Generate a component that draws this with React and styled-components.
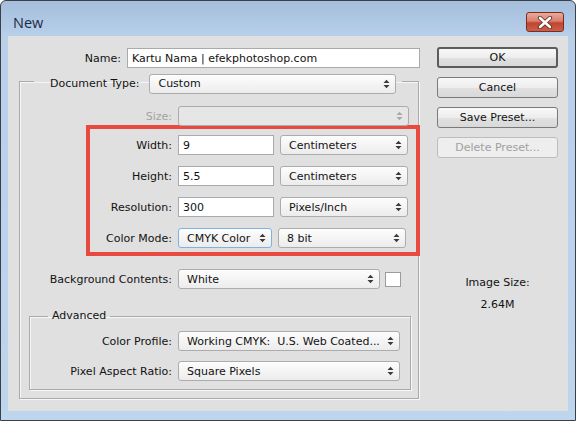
import React from "react";
import styled, { createGlobalStyle } from "styled-components";

const GlobalStyle = createGlobalStyle`
  html, body { margin: 0; padding: 0; }
  body {
    width: 576px;
    height: 421px;
    overflow: hidden;
    background: #ffffff;
    font-family: "DejaVu Sans", Tahoma, sans-serif;
    font-size: 11px;
    color: #121212;
  }
`;

const Window = styled.div`
  width: 576px;
  height: 421px;
  box-sizing: border-box;
  border: 1px solid #3b4048;
  border-radius: 6px 6px 0 0;
  background: linear-gradient(#a4bedb, #b8d0ea 36px, #bdd5ed);
  padding: 0 7px 9px 7px;
  display: flex;
  flex-direction: column;
`;

const TitleBar = styled.div`
  height: 35px;
  box-sizing: border-box;
  padding: 7px 4px 0 5px;
  display: flex;
  align-items: center;
  justify-content: space-between;
`;

const Title = styled.span`
  font-family: "Open Sans", "Noto Sans", sans-serif;
  font-size: 14.5px;
  color: #1b2b44;
`;

const CloseButton = styled.div`
  width: 38px;
  height: 20px;
  box-sizing: border-box;
  border: 1px solid #7d2b20;
  border-radius: 3px;
  background: linear-gradient(#e9ab9c, #d8806d 45%, #c3442f 55%, #c8604a);
  display: flex;
  align-items: center;
  justify-content: center;
`;

const Client = styled.div`
  flex: 1;
  background: #e0e0e0;
  display: flex;
`;

const LeftCol = styled.div`
  width: 412px;
  padding-top: 12px;
  display: flex;
  flex-direction: column;
`;

const RightCol = styled.div`
  margin-left: 17px;
  width: 121px;
  padding-top: 11px;
  display: flex;
  flex-direction: column;
  gap: 9px;
`;

const Row = styled.div`
  display: flex;
  align-items: center;
  height: 20px;
  gap: ${(p) => p.$gap ?? 6}px;
  margin-top: ${(p) => p.$top ?? 0}px;
`;

const Label = styled.span`
  width: ${(p) => p.$w}px;
  flex: none;
  text-align: right;
  white-space: nowrap;
  color: ${(p) => (p.$disabled ? "#a3a3a3" : "#121212")};
`;

const TextInput = styled.div`
  width: ${(p) => p.$w}px;
  height: 20px;
  box-sizing: border-box;
  border: 1px solid #a7abb0;
  background: #ffffff;
  padding-left: 4px;
  display: flex;
  align-items: center;
  white-space: nowrap;
  overflow: hidden;
`;

const SelectBox = styled.div`
  width: ${(p) => p.$w}px;
  height: 20px;
  flex: none;
  box-sizing: border-box;
  border: 1px solid ${(p) => (p.$focus ? "#7fb2e4" : "#acacac")};
  border-radius: 3px;
  background: ${(p) =>
    p.$disabled ? "#e6e6e6" : "linear-gradient(#fdfdfd, #ececec)"};
  padding: 0 5px 0 8px;
  display: flex;
  align-items: center;
  justify-content: space-between;
  white-space: nowrap;
  color: #121212;
`;

const Arrows = ({ dim }) => (
  <svg width="7" height="10" viewBox="0 0 7 10">
    <path d="M0.5 4 L3.5 0.8 L6.5 4 Z M0.5 6 L3.5 9.2 L6.5 6 Z" fill={dim ? "#a8a8a8" : "#3a3a3a"} />
  </svg>
);

const Select = ({ w, children, disabled, focus }) => (
  <SelectBox $w={w} $disabled={disabled} $focus={focus}>
    <span>{children}</span>
    <Arrows dim={disabled} />
  </SelectBox>
);

const Group = styled.fieldset`
  margin: ${(p) => p.$margin};
  width: ${(p) => p.$w}px;
  box-sizing: border-box;
  border: 1px solid #aaaaaa;
  box-shadow: 1px 1px 0 #f6f6f6, inset 1px 1px 0 #f6f6f6;
  padding: ${(p) => p.$pad};
  min-width: 0;
`;

const Legend = styled.legend`
  margin-left: ${(p) => p.$left}px;
  padding: ${(p) => p.$pad};
  height: 14px;
  line-height: 14px;
`;

const LegendInner = styled.div`
  display: flex;
  align-items: flex-start;
  gap: 10px;
  height: 14px;
  line-height: 20px;
`;

const Highlight = styled.div`
  margin: -1px -2px 0 66px;
  border: 4px solid #e84a3f;
  padding: 6px 0 4px 0;
  display: flex;
  flex-direction: column;
  gap: 11px;
`;

const Swatch = styled.div`
  width: 16px;
  height: 15px;
  box-sizing: border-box;
  border: 1px solid #9c9c9c;
  background: #ffffff;
  margin-left: -1px;
`;

const AdvRows = styled.div`
  display: flex;
  flex-direction: column;
  gap: 10px;
`;

const Button = styled.div`
  height: 21px;
  box-sizing: border-box;
  border: ${(p) => (p.$default ? "2px solid #5c5c5c" : "1px solid #7a7a7a")};
  border-color: ${(p) => (p.$disabled ? "#bdbdbd" : undefined)};
  border-radius: 3px;
  background: ${(p) =>
    p.$disabled ? "#eeeeee" : "linear-gradient(#f8f8f8, #ededed 50%, #e1e1e1 51%, #d9d9d9)"};
  color: ${(p) => (p.$disabled ? "#a0a0a0" : "#121212")};
  display: flex;
  align-items: center;
  justify-content: center;
`;

const SizeInfo = styled.div`
  margin-top: 105px;
  text-align: center;
  line-height: 22px;
`;

export default function App() {
  return (
    <>
      <GlobalStyle />
      <Window>
        <TitleBar>
          <Title>New</Title>
          <CloseButton>
            <svg width="16" height="13" viewBox="0 0 16 13">
              <path d="M3 2 L13 11 M13 2 L3 11" stroke="#5a2a22" strokeWidth="4.2" strokeLinecap="round" />
              <path d="M3 2 L13 11 M13 2 L3 11" stroke="#ffffff" strokeWidth="2.6" strokeLinecap="round" />
            </svg>
          </CloseButton>
        </TitleBar>
        <Client>
          <LeftCol>
            <Row>
              <Label $w={113}>Name:</Label>
              <TextInput $w={293}>Kartu Nama | efekphotoshop.com</TextInput>
            </Row>

            <Group $margin="6px 0 0 11px" $w={400} $pad="18px 0 8px 0">
              <Legend $left={14} $pad="0 6px 0 16px">
                <LegendInner>
                  <span>Document Type:</span>
                  <Select w={247}>Custom</Select>
                </LegendInner>
              </Legend>

              <Row>
                <Label $w={152} $disabled>Size:</Label>
                <Select w={231} disabled />
              </Row>

              <Highlight>
                <Row>
                  <Label $w={82}>Width:</Label>
                  <TextInput $w={96}>9</TextInput>
                  <Select w={128}>Centimeters</Select>
                </Row>
                <Row>
                  <Label $w={82}>Height:</Label>
                  <TextInput $w={96}>5.5</TextInput>
                  <Select w={128}>Centimeters</Select>
                </Row>
                <Row>
                  <Label $w={82}>Resolution:</Label>
                  <TextInput $w={96}>300</TextInput>
                  <Select w={128}>Pixels/Inch</Select>
                </Row>
                <Row>
                  <Label $w={82}>Color Mode:</Label>
                  <Select w={94} focus>CMYK Color</Select>
                  <Select w={128}>8 bit</Select>
                </Row>
              </Highlight>

              <Row $top={13}>
                <Label $w={152}>Background Contents:</Label>
                <Select w={202}>White</Select>
                <Swatch />
              </Row>

              <Group $margin="20px 0 0 9px" $w={382} $pad="8px 0 8px 0">
                <Legend $left={18} $pad="0 4px">Advanced</Legend>
                <AdvRows>
                  <Row>
                    <Label $w={142}>Color Profile:</Label>
                    <Select w={222}>Working CMYK:&nbsp; U.S. Web Coated...</Select>
                  </Row>
                  <Row>
                    <Label $w={142}>Pixel Aspect Ratio:</Label>
                    <Select w={222}>Square Pixels</Select>
                  </Row>
                </AdvRows>
              </Group>
            </Group>
          </LeftCol>

          <RightCol>
            <Button $default>OK</Button>
            <Button>Cancel</Button>
            <Button>Save Preset...</Button>
            <Button $disabled>Delete Preset...</Button>
            <SizeInfo>
              <div>Image Size:</div>
              <div>2.64M</div>
            </SizeInfo>
          </RightCol>
        </Client>
      </Window>
    </>
  );
}
